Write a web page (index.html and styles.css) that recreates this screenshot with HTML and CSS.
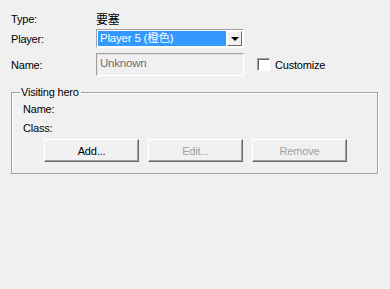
FILE: index.html
```html
<!DOCTYPE html>
<html lang="en">
<head>
    <meta charset="UTF-8">
    <title>Town properties</title>
    <link rel="stylesheet" href="styles.css">
</head>
<body>
    <div class="dialog">
        <div class="row row-type">
            <span class="label">Type:</span>
            <span class="value">要塞</span>
        </div>
        <div class="row row-player">
            <span class="label">Player:</span>
            <div class="combo">
                <span class="combo-text">Player 5 (橙色)</span>
                <span class="combo-btn"><span class="arrow"></span></span>
            </div>
        </div>
        <div class="row row-name">
            <span class="label">Name:</span>
            <div class="edit">Unknown</div>
            <label class="check">
                <span class="box"></span>
                <span>Customize</span>
            </label>
        </div>
        <fieldset class="group">
            <legend>Visiting hero</legend>
            <div class="field">Name:</div>
            <div class="field">Class:</div>
            <div class="buttons">
                <button class="btn">Add...</button>
                <button class="btn" disabled>Edit...</button>
                <button class="btn" disabled>Remove</button>
            </div>
        </fieldset>
    </div>
</body>
</html>
```

FILE: styles.css
```css
body {
    margin: 0;
    background: #f0f0f0;
    font-family: 'Liberation Sans', 'Noto Sans CJK SC', sans-serif;
    font-size: 11px;
    letter-spacing: -0.2px;
    color: #000;
}
.dialog {
    padding: 12px 12px 0 11px;
}
.row {
    display: flex;
    align-items: center;
}
.label {
    width: 85px;
    flex-shrink: 0;
}
.row-type {
    height: 13px;
}
.value {
    font-size: 12px;
}
.row-player {
    margin-top: 4px;
}
.combo {
    width: 148px;
    height: 19px;
    box-sizing: border-box;
    border: 1px solid;
    border-color: #a0a0a0 #fff #fff #a0a0a0;
    background: #fff;
    display: flex;
    padding: 1px;
}
.combo-text {
    flex: 1;
    background: #3399ff;
    color: #fff;
    font-size: 11.5px;
    line-height: 15px;
    padding-left: 2px;
    margin-right: 1px;
}
.combo-btn {
    width: 15px;
    box-sizing: border-box;
    border: 1px solid;
    border-color: #fff #696969 #696969 #fff;
    background: #f0f0f0;
    display: flex;
    align-items: center;
    justify-content: center;
}
.arrow {
    width: 0;
    height: 0;
    border-left: 4px solid transparent;
    border-right: 4px solid transparent;
    border-top: 4px solid #000;
}
.row-name {
    margin-top: 5px;
}
.edit {
    width: 148px;
    height: 23px;
    box-sizing: border-box;
    border: 1px solid;
    border-color: #a0a0a0 #fff #fff #a0a0a0;
    box-shadow: inset 1px 1px 0 #e3e3e3;
    color: #6d6d6d;
    font-size: 11.5px;
    line-height: 19px;
    padding-left: 3px;
}
.check {
    display: flex;
    align-items: center;
    margin-left: 13px;
    gap: 5px;
}
.box {
    width: 11px;
    height: 11px;
    border: 1px solid;
    border-color: #a0a0a0 #fff #fff #a0a0a0;
    background: #fff;
    box-shadow: inset 1px 1px 0 #696969;
}
.group {
    margin: 10px 0 0 0;
    width: 367px;
    height: 88px;
    box-sizing: border-box;
    border: 1px solid #a0a0a0;
    box-shadow: 1px 1px 0 #fff, inset 1px 1px 0 #fff;
    padding: 0 0 0 11px;
}
.group legend {
    padding: 0 2px 0 1px;
    margin-left: -3px;
}
.field {
    height: 19px;
    line-height: 14px;
}
.field:first-of-type {
    margin-top: 4px;
}
.buttons {
    display: flex;
    gap: 9px;
    margin: -1px 0 0 21px;
}
.btn {
    width: 95px;
    height: 23px;
    background: #f0f0f0;
    border: 1px solid;
    border-color: #fff #696969 #696969 #fff;
    box-shadow: inset -1px -1px 0 #a0a0a0;
    font-family: inherit;
    font-size: 11px;
    letter-spacing: inherit;
    color: #000;
    padding: 0;
}
.btn:disabled {
    color: #a0a0a0;
}
```
